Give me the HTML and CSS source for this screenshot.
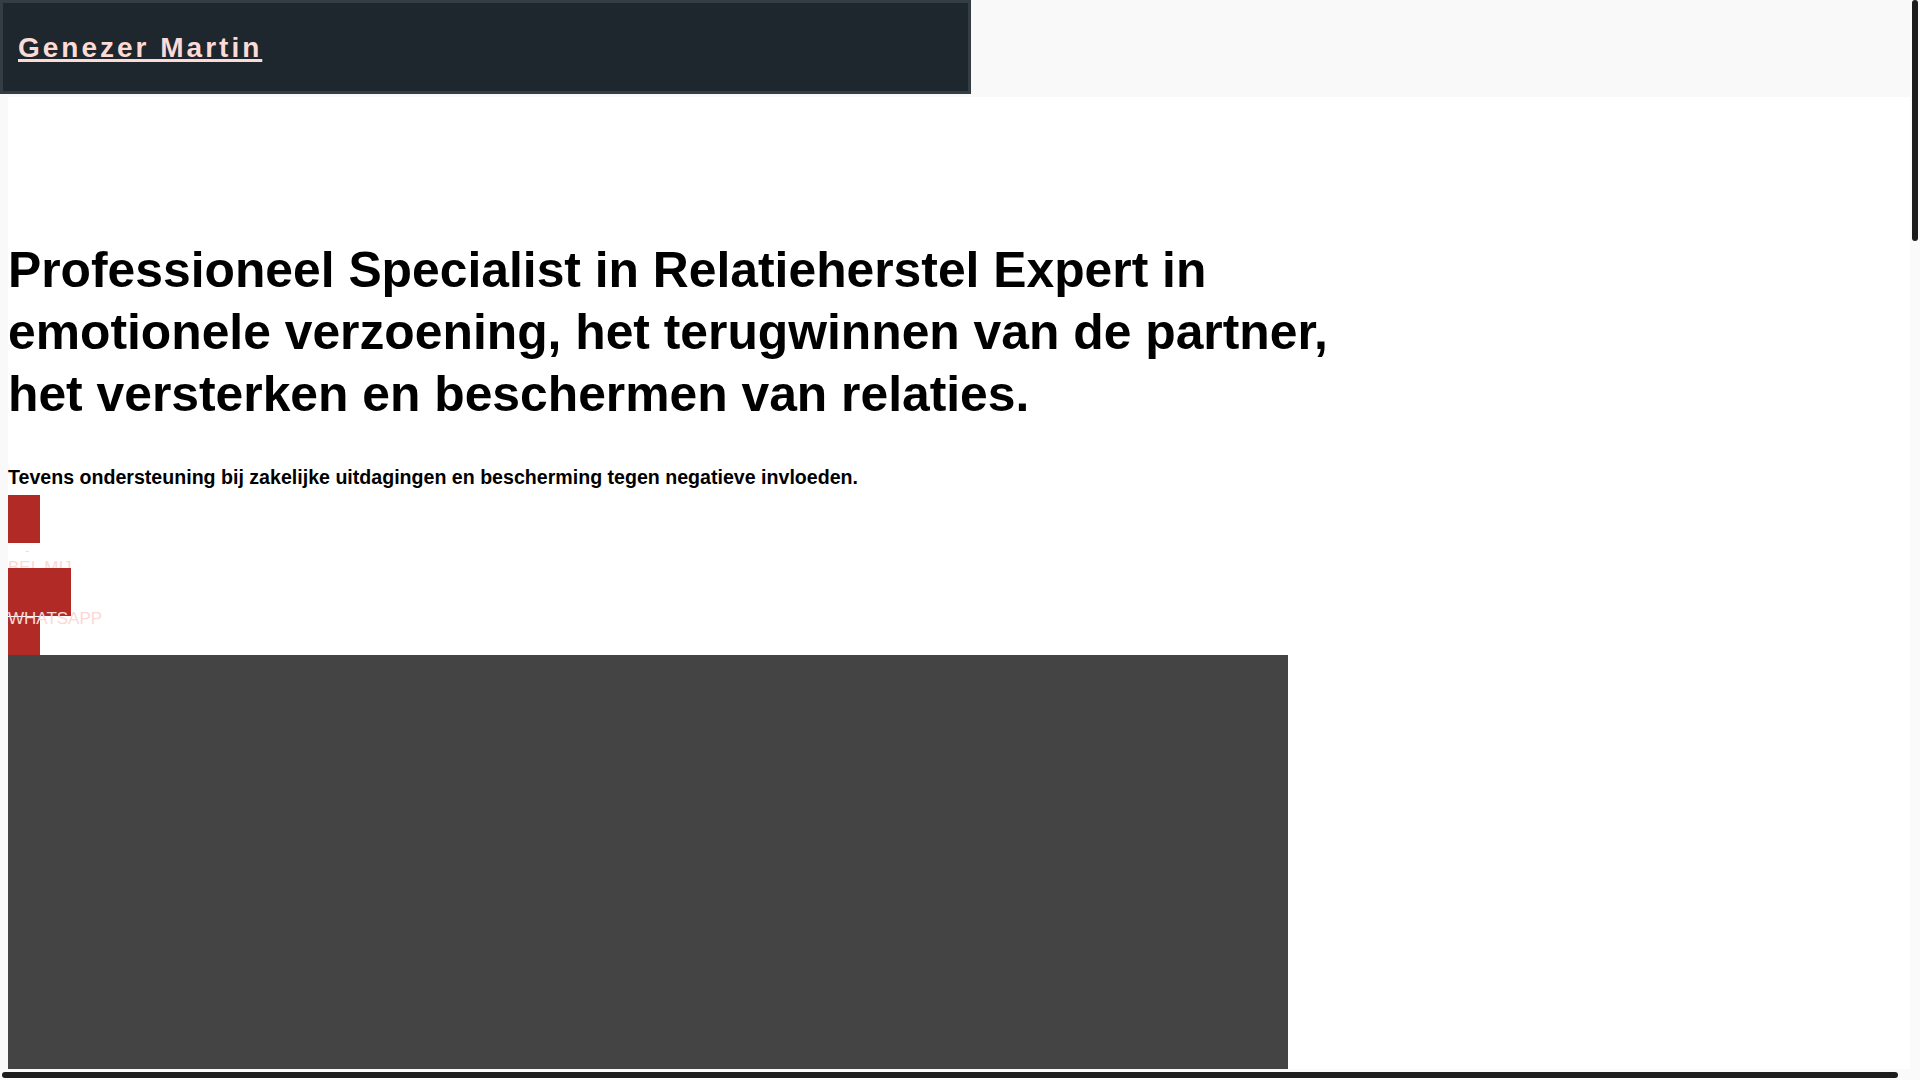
FILE: index.html
```html
<!DOCTYPE html>
<html lang="nl">
<head>
<meta charset="utf-8">
<title>Genezer Martin</title>
<link rel="stylesheet" href="styles.css">
</head>
<body>
<header class="topbar">
  <div class="brand-box"><a class="brand" href="#">Genezer Martin</a></div>
</header>
<main class="main">
  <section class="hero">
    <h1 class="hero-title">Professioneel Specialist in Relatieherstel Expert in emotionele verzoening, het terugwinnen van de partner, het versterken en beschermen van relaties.</h1>
    <p class="hero-sub">Tevens ondersteuning bij zakelijke uitdagingen en bescherming tegen negatieve invloeden.</p>
    <div class="cta">
      <span class="icon icon-a"></span>
      <span class="dash">-</span>
      <a class="cta-label" href="#">BEL MIJ</a>
      <span class="icon icon-b"></span>
      <a class="cta-label over" href="#">WHATSAPP</a>
      <span class="icon icon-c"></span>
    </div>
    <div class="video"></div>
  </section>
</main>
<div class="scroll-track scroll-track-v" aria-hidden="true"><span class="scroll-thumb-v"></span></div>
<div class="scroll-track scroll-track-h" aria-hidden="true"><span class="scroll-thumb-h"></span></div>
</body>
</html>
```
FILE: styles.css
```css
html {
  background: #f9f9f9;
}
body {
  margin: 0;
  background: #f9f9f9;
  font-family: "Liberation Sans", Arial, sans-serif;
  color: #000;
}
.topbar {
  width: 100%;
  height: 97px;
  background: #f9f9f9;
}
.brand-box {
  width: 971px;
  height: 94px;
  box-sizing: border-box;
  border: 3px solid #323d44;
  background: #1d272d;
  display: flex;
  align-items: center;
  padding: 2px 0 0 15px;
}
.brand {
  color: #fcdad6;
  font-size: 28px;
  font-weight: bold;
  letter-spacing: 3px;
  text-decoration: underline;
  text-decoration-thickness: 3px;
  text-underline-offset: 2px;
}
.main {
  margin-left: 8px;
  background: #fff;
  min-height: 4645px;
  padding-top: 142px;
  box-sizing: border-box;
}
.hero-title {
  margin: 0;
  max-width: 1360px;
  font-size: 49.8px;
  line-height: 62px;
  font-weight: bold;
  color: #000;
}
.hero-sub {
  margin: 41px 0 7px;
  font-size: 19.6px;
  line-height: 22px;
  font-weight: bold;
}
.cta {
  display: flex;
  flex-direction: column;
  align-items: flex-start;
}
.icon {
  display: block;
  background: #b22a26;
}
.icon-a {
  width: 32px;
  height: 48px;
}
.dash {
  font-size: 13px;
  line-height: 15px;
  height: 15px;
  color: #f9d6d2;
  padding-left: 17px;
}
.cta-label {
  font-size: 17px;
  line-height: 20px;
  color: #fbd9d5;
  text-decoration: none;
}
.icon-b {
  width: 63px;
  height: 48px;
  margin-top: -10px;
}
.cta-label.over {
  margin-top: -7.5px;
  z-index: 1;
}
.icon-c {
  width: 32px;
  height: 38px;
  margin-top: -11.5px;
}
.video {
  width: 1280px;
  height: 720px;
  background: #444444;
}
.scroll-track {
  position: fixed;
  background: #fafafa;
}
.scroll-track-v {
  top: 0;
  right: 0;
  width: 10px;
  height: 1069px;
}
.scroll-thumb-v {
  display: block;
  margin: 0 auto;
  width: 6px;
  height: 241px;
  border-radius: 3px;
  background: #1c1c1c;
}
.scroll-track-h {
  left: 0;
  bottom: 0;
  width: 100%;
  height: 11px;
  display: flex;
  align-items: center;
}
.scroll-thumb-h {
  display: block;
  margin-left: 2px;
  width: 1896px;
  height: 6px;
  border-radius: 3px;
  background: #1c1c1c;
}
```
